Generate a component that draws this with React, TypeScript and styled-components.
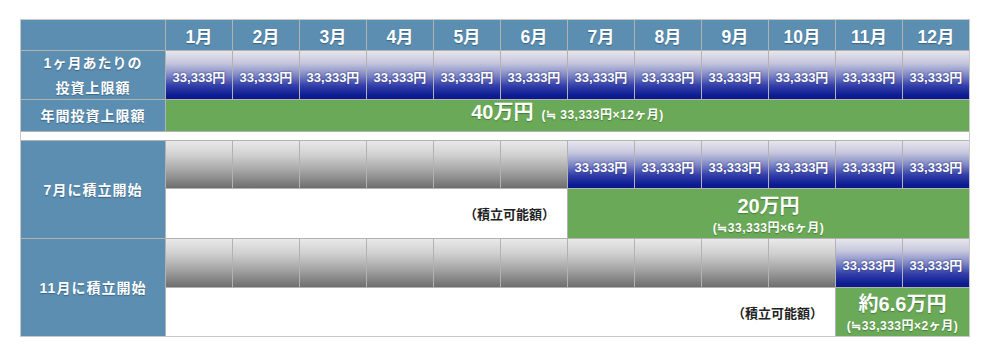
import styled, { createGlobalStyle } from "styled-components";

const GlobalStyle = createGlobalStyle`
    body {
        margin: 0;
        background: #ffffff;
        font-family: "Liberation Sans", "Noto Sans CJK JP", sans-serif;
    }
`

const Page = styled.div`
    padding: 19px 0 0 20px;
`

const Table = styled.div`
    display: grid;
    grid-template-columns: 144px repeat(12, 66px);
    grid-template-rows: 30px 48px 31px 8px 47px 49px 48px 48px;
    gap: 1px;
    width: max-content;
    background: #b2b2b2;
    border: 1px solid #c9c9c9;
    font-weight: 700;
    color: #ffffff;
`

const Steel = styled.div<{ $rows?: number }>`
    grid-row: span ${p => p.$rows || 1};
    background: #5b8eb1;
    display: flex;
    align-items: center;
    justify-content: center;
    text-align: center;
    text-shadow: 0 1px 1px rgba(20, 50, 80, 0.45);
`

const MonthHead = styled(Steel)`
    font-size: 17.5px;
    padding-top: 1px;
`

const RowLabel = styled(Steel)`
    font-size: 14px;
    letter-spacing: 1px;
    line-height: 25px;
    padding-top: 1px;
`

const Amount = styled.div`
    background: linear-gradient(to bottom, #e6e6ee 0%, #c6c7dd 25%, #8088c6 50%, #3440aa 72%, #0e1d92 92%, #0a1888 100%);
    display: flex;
    align-items: center;
    justify-content: center;
    padding-top: 3px;
    font-size: 13px;
    white-space: nowrap;
    text-shadow: 0 0 2px rgba(10, 20, 90, 0.8);
`

const Empty = styled.div`
    background: linear-gradient(to bottom, #e9e9e9 0%, #d0d0d0 30%, #a2a2a2 65%, #6e6e6e 100%);
`

const Total = styled.div<{ $span: number }>`
    grid-column: span ${p => p.$span};
    background: #6aa957;
    display: flex;
    flex-direction: column;
    align-items: center;
    justify-content: center;
    gap: 4px;
    padding-top: 2px;
    white-space: nowrap;
    text-shadow: 0 1px 1px rgba(30, 70, 20, 0.45);
`

const InlineTotal = styled(Total)`
    flex-direction: row;
    align-items: baseline;
    gap: 8px;
    padding-top: 1px;
`

const Big = styled.span`
    font-size: 20px;
    line-height: 22px;
`

const Small = styled.span`
    font-size: 12px;
    line-height: 14px;
    letter-spacing: 0.5px;
`

const Spacer = styled.div`
    grid-column: 1 / -1;
    background: #ffffff;
`

const Note = styled.div<{ $span: number }>`
    grid-column: span ${p => p.$span};
    background: #ffffff;
    color: #222222;
    display: flex;
    align-items: center;
    justify-content: flex-end;
    padding-right: 12px;
    font-family: "Noto Sans CJK JP", sans-serif;
    font-size: 13px;
`

const months = Array.from({ length: 12 }, (_, i) => `${i + 1}月`);
const amount = "33,333円";

const App = () => {
    return (
        <Page>
            <GlobalStyle />
            <Table>
                <Steel />
                {months.map(m => (
                    <MonthHead key={m}>{m}</MonthHead>
                ))}

                <RowLabel>1ヶ月あたりの<br />投資上限額</RowLabel>
                {months.map(m => (
                    <Amount key={m}>{amount}</Amount>
                ))}

                <RowLabel>年間投資上限額</RowLabel>
                <InlineTotal $span={12}>
                    <Big>40万円</Big>
                    <Small>(≒ 33,333円×12ヶ月)</Small>
                </InlineTotal>

                <Spacer />

                <RowLabel $rows={2}>7月に積立開始</RowLabel>
                {months.map((m, i) => (i < 6 ? <Empty key={m} /> : <Amount key={m}>{amount}</Amount>))}
                <Note $span={6}>（積立可能額）</Note>
                <Total $span={6}>
                    <Big>20万円</Big>
                    <Small>(≒33,333円×6ヶ月)</Small>
                </Total>

                <RowLabel $rows={2}>11月に積立開始</RowLabel>
                {months.map((m, i) => (i < 10 ? <Empty key={m} /> : <Amount key={m}>{amount}</Amount>))}
                <Note $span={10}>（積立可能額）</Note>
                <Total $span={2}>
                    <Big>約6.6万円</Big>
                    <Small>(≒33,333円×2ヶ月)</Small>
                </Total>
            </Table>
        </Page>
    )
}

export default App;
